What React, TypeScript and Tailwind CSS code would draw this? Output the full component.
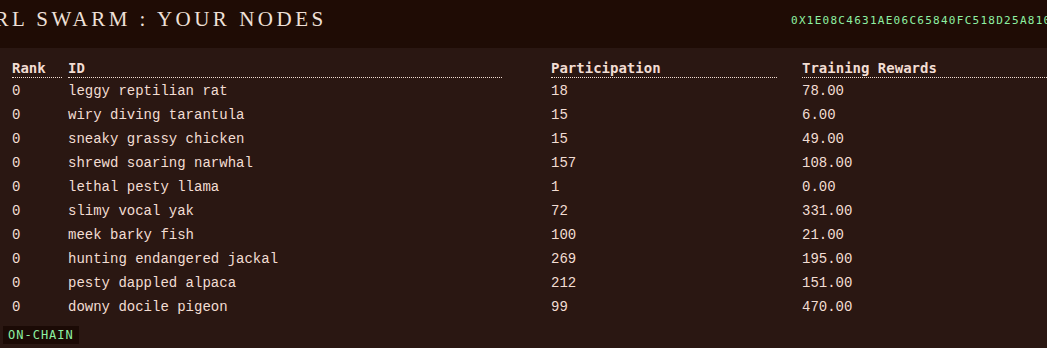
import React from "react";

const rows = [
  ["0", "leggy reptilian rat", "18", "78.00"],
  ["0", "wiry diving tarantula", "15", "6.00"],
  ["0", "sneaky grassy chicken", "15", "49.00"],
  ["0", "shrewd soaring narwhal", "157", "108.00"],
  ["0", "lethal pesty llama", "1", "0.00"],
  ["0", "slimy vocal yak", "72", "331.00"],
  ["0", "meek barky fish", "100", "21.00"],
  ["0", "hunting endangered jackal", "269", "195.00"],
  ["0", "pesty dappled alpaca", "212", "151.00"],
  ["0", "downy docile pigeon", "99", "470.00"],
];

const mono = "font-['Liberation_Mono','DejaVu_Sans_Mono',monospace]";
const headMono = "font-['DejaVu_Sans_Mono','Liberation_Mono',monospace]";

export default function App() {
  return (
    <div className="w-[1047px] h-[348px] overflow-hidden bg-[#2a1712] text-[#f2ddd3]">
      <header className="h-[48px] bg-[#1f0c05] grid grid-cols-[791px_1fr] items-start overflow-hidden">
        <h1 className="pt-[7px] -ml-[5.5px] whitespace-nowrap font-['Liberation_Serif','Times_New_Roman',serif] text-[21px] leading-[24px] tracking-[3.5px] text-[#efe0d8] uppercase">
          RL SWARM : YOUR NODES
        </h1>
        <div className={`mt-[13px] whitespace-nowrap overflow-hidden ${headMono} text-[11px] leading-[16px] tracking-[1.27px] text-[#8ef0a2]`}>
          0X1E08C4631AE06C65840FC518D25A810
        </div>
      </header>
      <main className="pt-[10px] pl-[12px]">
        <div className={`flex ${headMono} font-bold text-[14px] leading-[17px] pt-[2px]`}>
          <div className="w-[50px] border-b border-dotted border-[#f2ddd3]">Rank</div>
          <div className="ml-[6px] w-[434px] border-b border-dotted border-[#f2ddd3]">ID</div>
          <div className="ml-[49px] w-[226px] border-b border-dotted border-[#f2ddd3]">Participation</div>
          <div className="ml-[25px] flex-1 border-b border-dotted border-[#f2ddd3] whitespace-nowrap">Training Rewards</div>
        </div>
        <div className={`${mono} text-[14px] pt-[1px]`}>
          {rows.map((r, i) => (
            <div key={i} className="flex h-[24px] items-center">
              <div className="w-[50px]">{r[0]}</div>
              <div className="ml-[6px] w-[434px] whitespace-nowrap">{r[1]}</div>
              <div className="ml-[49px] w-[226px]">{r[2]}</div>
              <div className="ml-[25px] flex-1">{r[3]}</div>
            </div>
          ))}
        </div>
        <div className="-ml-[9px] mt-[7px] flex">
          <span className={`bg-[#1b0a05] px-[5px] h-[18px] leading-[18px] ${headMono} text-[12px] tracking-[1px] text-[#8ef0a2]`}>
            ON-CHAIN
          </span>
        </div>
      </main>
    </div>
  );
}
